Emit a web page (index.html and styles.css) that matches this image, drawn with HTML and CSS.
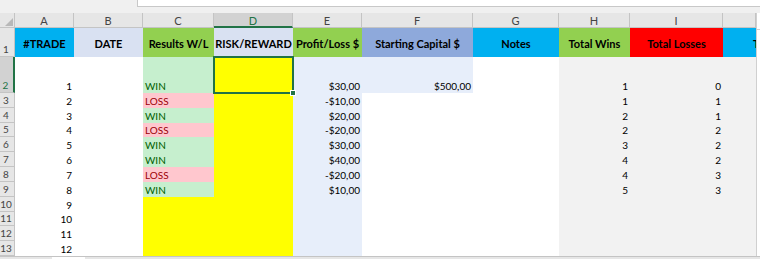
FILE: index.html
```html
<!DOCTYPE html>
<html>
<head>
<meta charset="utf-8">
<link rel="stylesheet" href="styles.css">
</head>
<body>
<div class="topstrip">
  <div class="namearea"></div>
  <div class="fxbox"></div>
</div>
<div class="main">
  <div class="sheet">
    <!-- column headers -->
    <div class="corner"><svg width="10" height="10" viewBox="0 0 10 10"><polygon points="9,1 9,9 1,9" fill="#b8b8b8"/></svg></div>
    <div class="ch">A</div><div class="ch">B</div><div class="ch">C</div><div class="ch sel">D</div><div class="ch">E</div><div class="ch">F</div><div class="ch">G</div><div class="ch">H</div><div class="ch">I</div><div class="ch"></div>
    <!-- row 1 -->
    <div class="rh">1</div>
    <div class="hd blue">#TRADE</div><div class="hd lav">DATE</div><div class="hd green">Results W/L</div><div class="hd lav">RISK/REWARD</div><div class="hd green">Profit/Loss $</div><div class="hd peri">Starting Capital $</div><div class="hd blue">Notes</div><div class="hd green">Total Wins</div><div class="hd red">Total Losses</div><div class="hd blue jcol"><span>Total Trades</span></div>
    <!-- row 2 -->
    <div class="rh sel">2</div>
    <div class="c n">1</div><div class="c"></div><div class="c win">WIN</div><div class="c yel active"></div><div class="c n lb">$30,00</div><div class="c n lb">$500,00</div><div class="c"></div><div class="c n gr">1</div><div class="c n gr">0</div><div class="c gr"></div>
    <!-- row 3 -->
    <div class="rh">3</div>
    <div class="c n">2</div><div class="c"></div><div class="c loss">LOSS</div><div class="c yel"></div><div class="c n lb">-$10,00</div><div class="c"></div><div class="c"></div><div class="c n gr">1</div><div class="c n gr">1</div><div class="c gr"></div>
    <!-- row 4 -->
    <div class="rh">4</div>
    <div class="c n">3</div><div class="c"></div><div class="c win">WIN</div><div class="c yel"></div><div class="c n lb">$20,00</div><div class="c"></div><div class="c"></div><div class="c n gr">2</div><div class="c n gr">1</div><div class="c gr"></div>
    <!-- row 5 -->
    <div class="rh">5</div>
    <div class="c n">4</div><div class="c"></div><div class="c loss">LOSS</div><div class="c yel"></div><div class="c n lb">-$20,00</div><div class="c"></div><div class="c"></div><div class="c n gr">2</div><div class="c n gr">2</div><div class="c gr"></div>
    <!-- row 6 -->
    <div class="rh">6</div>
    <div class="c n">5</div><div class="c"></div><div class="c win">WIN</div><div class="c yel"></div><div class="c n lb">$30,00</div><div class="c"></div><div class="c"></div><div class="c n gr">3</div><div class="c n gr">2</div><div class="c gr"></div>
    <!-- row 7 -->
    <div class="rh">7</div>
    <div class="c n">6</div><div class="c"></div><div class="c win">WIN</div><div class="c yel"></div><div class="c n lb">$40,00</div><div class="c"></div><div class="c"></div><div class="c n gr">4</div><div class="c n gr">2</div><div class="c gr"></div>
    <!-- row 8 -->
    <div class="rh">8</div>
    <div class="c n">7</div><div class="c"></div><div class="c loss">LOSS</div><div class="c yel"></div><div class="c n lb">-$20,00</div><div class="c"></div><div class="c"></div><div class="c n gr">4</div><div class="c n gr">3</div><div class="c gr"></div>
    <!-- row 9 -->
    <div class="rh">9</div>
    <div class="c n">8</div><div class="c"></div><div class="c win">WIN</div><div class="c yel"></div><div class="c n lb">$10,00</div><div class="c"></div><div class="c"></div><div class="c n gr">5</div><div class="c n gr">3</div><div class="c gr"></div>
    <!-- row 10 -->
    <div class="rh">10</div>
    <div class="c n">9</div><div class="c"></div><div class="c yel"></div><div class="c yel"></div><div class="c lb"></div><div class="c"></div><div class="c"></div><div class="c gr"></div><div class="c gr"></div><div class="c gr"></div>
    <!-- row 11 -->
    <div class="rh">11</div>
    <div class="c n">10</div><div class="c"></div><div class="c yel"></div><div class="c yel"></div><div class="c lb"></div><div class="c"></div><div class="c"></div><div class="c gr"></div><div class="c gr"></div><div class="c gr"></div>
    <!-- row 12 -->
    <div class="rh">12</div>
    <div class="c n">11</div><div class="c"></div><div class="c yel"></div><div class="c yel"></div><div class="c lb"></div><div class="c"></div><div class="c"></div><div class="c gr"></div><div class="c gr"></div><div class="c gr"></div>
    <!-- row 13 -->
    <div class="rh">13</div>
    <div class="c n">12</div><div class="c"></div><div class="c yel"></div><div class="c yel"></div><div class="c lb"></div><div class="c"></div><div class="c"></div><div class="c gr"></div><div class="c gr"></div><div class="c gr"></div>
  </div>
  <div class="vscroll"><div class="vbtn"></div></div>
</div>
<div class="bottombar">
  <div class="bb-left"></div>
  <div class="bb-tab"></div>
  <div class="bb-rest"></div>
</div>
</body>
</html>
```

FILE: styles.css
```css
html, body {
  margin: 0;
  padding: 0;
}
body {
  width: 760px;
  height: 259px;
  overflow: hidden;
  background: #ffffff;
  font-family: Lato, "Liberation Sans", sans-serif;
  font-size: 10px;
  color: #000;
}
.topstrip {
  height: 13px;
  display: flex;
  background: #f0f0f0;
}
.namearea {
  width: 137px;
}
.fxbox {
  flex: 1;
  height: 6px;
  background: #ffffff;
  border-left: 1px solid #c8c8c8;
  border-bottom: 1px solid #c8c8c8;
}
.main {
  display: flex;
  height: 243px;
}
.sheet {
  display: grid;
  grid-template-columns: 15px 59px 69px 71px 79px 69px 111px 86px 71px 93px 33px;
  grid-template-rows: 15px 29px 36px repeat(11, 1fr);
  height: 243px;
  width: 756px;
}
.vscroll {
  width: 4px;
  background: #ffffff;
  border-left: 1px solid #d0d0d0;
  box-sizing: border-box;
}
.vbtn {
  height: 16px;
  border-bottom: 1px solid #d0d0d0;
}
.corner {
  background: #e6e6e6;
  border-right: 1px solid #c4c4c4;
  border-bottom: 1px solid #c4c4c4;
  box-sizing: border-box;
  display: flex;
  align-items: flex-end;
  justify-content: flex-end;
}
.corner svg { display: block; }
.ch {
  background: #e6e6e6;
  color: #444;
  border-right: 1px solid #c4c4c4;
  border-bottom: 1px solid #c4c4c4;
  box-sizing: border-box;
  display: flex;
  align-items: center;
  justify-content: center;
  font-size: 11px;
  padding-top: 1px;
}
.ch.sel {
  background: #d2d2d2;
  color: #217346;
  border-bottom: 2px solid #217346;
}
.rh {
  background: #e6e6e6;
  color: #444;
  border-right: 1px solid #c4c4c4;
  border-bottom: 1px solid #c4c4c4;
  box-sizing: border-box;
  display: flex;
  align-items: flex-end;
  justify-content: center;
  font-size: 10px;
  line-height: 12px;
  padding-bottom: 1px;
  padding-right: 2px;
}
.rh.sel {
  background: #d2d2d2;
  color: #217346;
  border-right: 2px solid #217346;
}
.hd {
  display: flex;
  align-items: center;
  justify-content: center;
  font-weight: bold;
  font-size: 11px;
  white-space: nowrap;
  overflow: hidden;
  padding-top: 1px;
}
.hd.jcol {
  justify-content: flex-start;
  padding-left: 30px;
}
.c {
  display: flex;
  align-items: flex-end;
  padding: 0 2px 1px 2px;
  line-height: 12px;
  white-space: nowrap;
  overflow: hidden;
}
.c.n { justify-content: flex-end; }
.blue { background: #00b0f0; }
.lav { background: #d9e1f2; }
.green { background: #92d050; }
.peri { background: #8ea9db; }
.red { background: #ff0000; }
.yel { background: #ffff00; }
.lb { background: #e7eefa; }
.gr { background: #f2f2f2; }
.win { background: #c6efce; color: #006100; }
.loss { background: #ffc7ce; color: #9c0006; }
.active {
  position: relative;
  overflow: visible;
}
.active::after {
  content: "";
  position: absolute;
  left: -1px;
  top: -1px;
  right: -1px;
  bottom: -1px;
  border: 2px solid #217346;
}
.active::before {
  content: "";
  position: absolute;
  right: -3px;
  bottom: -3px;
  width: 4px;
  height: 4px;
  background: #217346;
  border: 1px solid #fff;
  z-index: 2;
}
.bottombar {
  height: 3px;
  display: flex;
  background: #e6e6e6;
  border-top: 1px solid #c4c4c4;
  box-sizing: border-box;
}
.bb-left { width: 52px; }
.bb-tab {
  width: 33px;
  background: #ffffff;
}
.bb-rest { flex: 1; }
```
